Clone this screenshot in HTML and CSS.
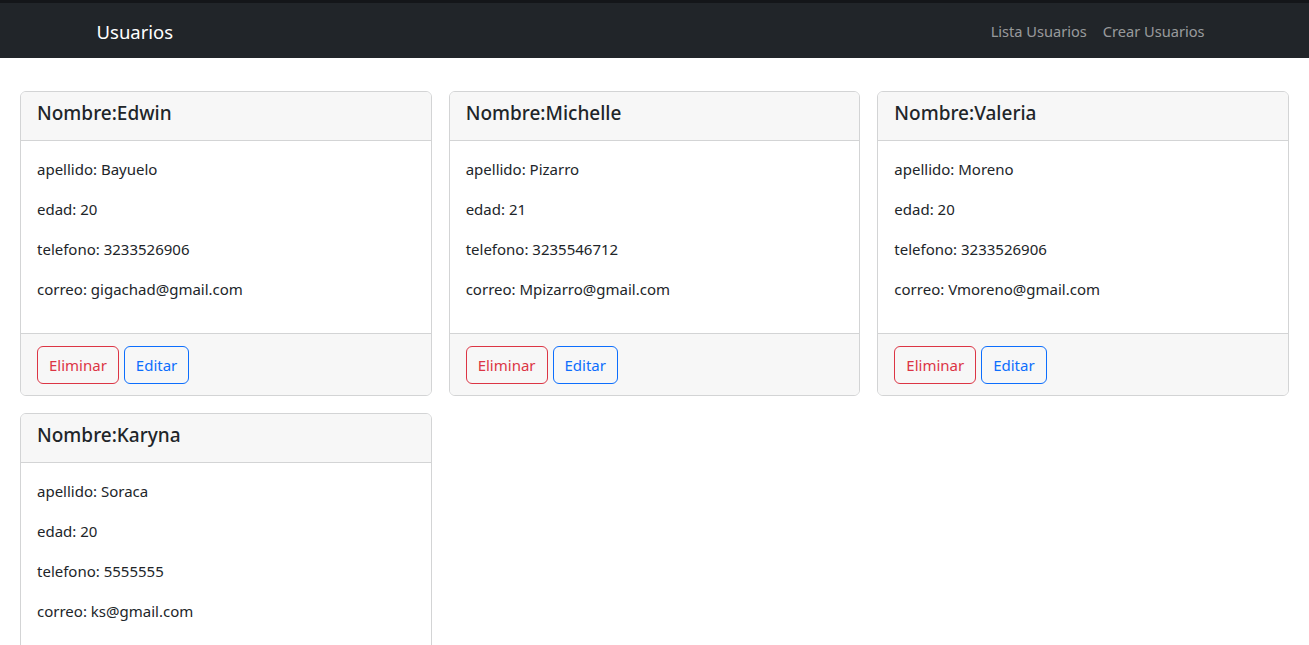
FILE: index.html
```html
<!DOCTYPE html>
<html lang="es">
<head>
<meta charset="utf-8">
<title>Usuarios</title>
<link rel="stylesheet" href="styles.css">
</head>
<body>
<nav class="navbar">
  <div class="nav-inner">
    <a class="brand" href="#">Usuarios</a>
    <ul class="nav-links">
      <li><a href="#">Lista Usuarios</a></li>
      <li><a href="#">Crear Usuarios</a></li>
    </ul>
  </div>
</nav>
<main class="cards">
  <div class="card">
    <div class="card-header"><h5>Nombre:Edwin</h5></div>
    <div class="card-body">
      <p>apellido: Bayuelo</p>
      <p>edad: 20</p>
      <p>telefono: 3233526906</p>
      <p>correo: gigachad@gmail.com</p>
    </div>
    <div class="card-footer">
      <button class="btn btn-danger">Eliminar</button>
      <button class="btn btn-primary">Editar</button>
    </div>
  </div>
  <div class="card">
    <div class="card-header"><h5>Nombre:Michelle</h5></div>
    <div class="card-body">
      <p>apellido: Pizarro</p>
      <p>edad: 21</p>
      <p>telefono: 3235546712</p>
      <p>correo: Mpizarro@gmail.com</p>
    </div>
    <div class="card-footer">
      <button class="btn btn-danger">Eliminar</button>
      <button class="btn btn-primary">Editar</button>
    </div>
  </div>
  <div class="card">
    <div class="card-header"><h5>Nombre:Valeria</h5></div>
    <div class="card-body">
      <p>apellido: Moreno</p>
      <p>edad: 20</p>
      <p>telefono: 3233526906</p>
      <p>correo: Vmoreno@gmail.com</p>
    </div>
    <div class="card-footer">
      <button class="btn btn-danger">Eliminar</button>
      <button class="btn btn-primary">Editar</button>
    </div>
  </div>
  <div class="card">
    <div class="card-header"><h5>Nombre:Karyna</h5></div>
    <div class="card-body">
      <p>apellido: Soraca</p>
      <p>edad: 20</p>
      <p>telefono: 5555555</p>
      <p>correo: ks@gmail.com</p>
    </div>
    <div class="card-footer">
      <button class="btn btn-danger">Eliminar</button>
      <button class="btn btn-primary">Editar</button>
    </div>
  </div>
</main>
</body>
</html>
```
FILE: styles.css
```css
* { box-sizing: border-box; }
body {
  margin: 0;
  font-family: "Noto Sans", "Open Sans", sans-serif;
  font-size: 15px;
  line-height: 24px;
  color: #212529;
  background: #fff;
}
.navbar {
  background: #212529;
  border-top: 3px solid #141619;
  height: 58px;
}
.nav-inner {
  max-width: 1140px;
  margin: 0 auto;
  padding: 0 12px;
  height: 55px;
  display: flex;
  align-items: center;
  justify-content: space-between;
}
.brand {
  color: #fff;
  text-decoration: none;
  font-size: 18.5px;
  line-height: 30px;
  padding-top: 2px;
}
.nav-links {
  list-style: none;
  margin: 0;
  padding: 0;
  display: flex;
}
.nav-links a {
  display: block;
  padding: 8px;
  font-size: 14.6px;
  color: rgba(255,255,255,.55);
  text-decoration: none;
}
.cards {
  display: grid;
  grid-template-columns: repeat(3, 1fr);
  gap: 17px;
  padding: 33px 20px 0;
  align-items: start;
}
.card {
  border: 1px solid #d3d4d5;
  border-radius: 6px;
  background: #fff;
  overflow: hidden;
}
.card-header {
  background: #f7f7f7;
  border-bottom: 1px solid #d3d4d5;
  padding: 9px 16px 15px;
}
.card-header h5 {
  margin: 0;
  font-size: 19px;
  font-weight: 500;
  line-height: 24px;
}
.card-body {
  padding: 16px;
}
.card-body p {
  margin: 0 0 16px;
}
.card-footer {
  background: #f7f7f7;
  border-top: 1px solid #d3d4d5;
  padding: 12px 16px 11px;
  display: flex;
  gap: 5px;
}
.btn {
  font-family: inherit;
  font-size: 15px;
  line-height: 24px;
  padding: 6px 11px;
  border-radius: 6px;
  background: transparent;
  border: 1px solid;
  cursor: pointer;
}
.btn-danger { color: #dc3545; border-color: #dc3545; }
.btn-primary { color: #0d6efd; border-color: #0d6efd; }
```
